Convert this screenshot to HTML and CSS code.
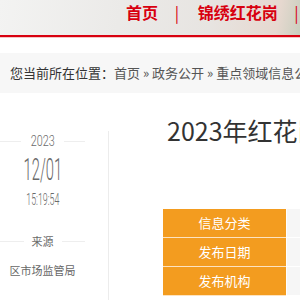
FILE: index.html
```html
<!DOCTYPE html>
<html lang="zh-CN">
<head>
    <meta charset="UTF-8">
    <meta name="viewport" content="width=device-width, initial-scale=1.0">
    <title>2023年红花岗区市场监管局</title>
    <link rel="stylesheet" href="styles.css">
</head>
<body>
    <div class="header">
        <div class="nav">
            <a href="#">首页</a>
            <span class="sep">|</span>
            <a href="#">锦绣红花岗</a>
            <span class="sep">|</span>
        </div>
    </div>

    <div class="crumbs">
        <span class="here">您当前所在位置：</span><a href="#">首页</a> » <a href="#">政务公开</a> » <a href="#">重点领域信息公开</a> » <a href="#">市场监管</a>
    </div>

    <div class="main">
        <div class="side">
            <div class="label-row"><span class="year">2023</span></div>
            <div class="day"><span>12/01</span></div>
            <div class="time"><span>15:19:54</span></div>
            <div class="label-row source-label"><span class="cn">来源</span></div>
            <div class="source">区市场监管局</div>
        </div>

        <div class="content">
            <h1 class="title">2023年红花岗区市场监管局抽查结果公示</h1>
            <div class="meta">
                <div class="meta-row"><div class="meta-key">信息分类</div><div class="meta-val"></div></div>
                <div class="meta-row"><div class="meta-key">发布日期</div><div class="meta-val"></div></div>
                <div class="meta-row"><div class="meta-key">发布机构</div><div class="meta-val"></div></div>
            </div>
        </div>
    </div>
</body>
</html>
```

FILE: styles.css
```css
body {
    margin: 0;
    font-family: "Noto Sans CJK SC", "Noto Sans", sans-serif;
    background: #fff;
    overflow: hidden;
    width: 300px;
    height: 300px;
}

a {
    color: inherit;
    text-decoration: none;
}

.header {
    height: 35px;
    border-bottom: 2px solid #d8000f;
    box-shadow: 0 1px 0 #f4c6c6;
    background: linear-gradient(100deg, #f3f3f2 0%, #ebeae8 40%, #e7e4e1 70%, #e6d8cf 92%, #c9cfbf 100%);
}

.nav {
    padding-left: 126px;
    white-space: nowrap;
    font-size: 16px;
    font-weight: bold;
    line-height: 25px;
    color: #d8000f;
}

.nav .sep {
    font-weight: normal;
    margin: 0 15px 0 13px;
}

.crumbs {
    margin-top: 16px;
    height: 40px;
    line-height: 40px;
    padding-left: 10px;
    background: #f7f7f7;
    font-size: 13px;
    color: #555;
    white-space: nowrap;
}

.crumbs .here {
    color: #333;
}

.main {
    display: flex;
}

.side {
    flex: none;
    width: 108px;
    margin-top: 38px;
    height: 200px;
    border-right: 1px solid #ececec;
    color: #6a6a6a;
}

.side > div {
    width: 85px;
    text-align: center;
}

.label-row {
    display: flex;
    align-items: center;
    height: 20px;
    gap: 8px;
}

.label-row::before,
.label-row::after {
    content: "";
    flex: 1;
    height: 1px;
    background: #eeeeee;
}

.year {
    display: inline-block;
    font-family: Roboto, sans-serif;
    font-weight: 300;
    font-size: 15px;
    transform: scaleX(0.72);
    margin: 0 -3px;
}

.day,
.time {
    font-family: Roboto, sans-serif;
    font-weight: 300;
}

.day {
    height: 36px;
    line-height: 36px;
    font-size: 32px;
}

.time {
    height: 24px;
    line-height: 24px;
    font-size: 17px;
}

.day span,
.time span {
    display: inline-block;
}

.day span { transform: scaleX(0.46); }
.time span { transform: scaleX(0.52); }

.source-label {
    margin-top: 20px;
    font-size: 11px;
}

.source {
    margin-top: 9px;
    height: 20px;
    line-height: 20px;
    font-size: 11px;
    color: #666;
}

.content {
    flex: 1;
    padding-left: 54px;
    min-width: 0;
}

.title {
    margin: 17px 0 0 4px;
    font-size: 25px;
    font-weight: normal;
    line-height: 40px;
    color: #333;
    white-space: nowrap;
}

.meta {
    margin-top: 59px;
}

.meta-row {
    display: flex;
    height: 29px;
}

.meta-key {
    flex: none;
    width: 123px;
    height: 28px;
    line-height: 28px;
    background: #f39c1f;
    border-bottom: 1px solid #fde3c0;
    color: #fff;
    font-size: 13px;
    text-align: center;
}

.meta-val {
    flex: 1;
    height: 28px;
    margin-left: 1px;
    background: #f6f6f6;
    border-bottom: 1px solid #fff;
}
```
